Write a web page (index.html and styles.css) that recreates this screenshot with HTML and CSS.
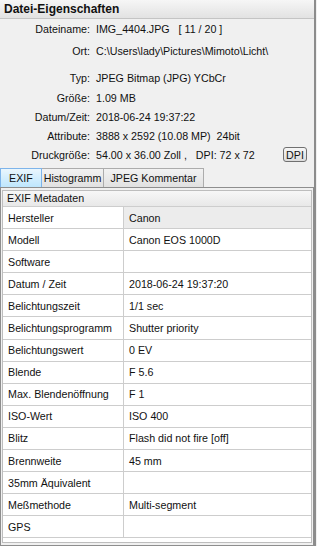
FILE: index.html
```html
<!DOCTYPE html>
<html lang="de">
<head>
  <meta charset="UTF-8">
  <meta name="viewport" content="width=device-width, initial-scale=1.0">
  <title>Datei-Eigenschaften</title>
  <link rel="stylesheet" href="styles.css">
</head>
<body>

<div class="window">
  <div class="title">Datei-Eigenschaften</div>

  <div class="props">
    <div class="row"><span class="label">Dateiname:</span><span class="value">IMG_4404.JPG &nbsp;&nbsp;[ 11 / 20 ]</span></div>
    <div class="row ort"><span class="label">Ort:</span><span class="value">C:\Users\lady\Pictures\Mimoto\Licht\</span></div>
    <div class="row typ"><span class="label">Typ:</span><span class="value">JPEG Bitmap (JPG) YCbCr</span></div>
    <div class="row size"><span class="label">Größe:</span><span class="value">1.09 MB</span></div>
    <div class="row"><span class="label">Datum/Zeit:</span><span class="value">2018-06-24 19:37:22</span></div>
    <div class="row"><span class="label">Attribute:</span><span class="value">3888 x 2592 (10.08 MP) &nbsp;24bit</span></div>
    <div class="row"><span class="label">Druckgröße:</span><span class="value">54.00 x 36.00 Zoll , &nbsp;&nbsp;DPI: 72 x 72</span><button class="dpi">DPI</button></div>
  </div>

  <div class="tabs">
    <div class="tab active">EXIF</div>
    <div class="tab histo">Histogramm</div>
    <div class="tab jpeg">JPEG Kommentar</div>
  </div>

  <div class="tabpanel">
    <div class="box">
      <div class="boxhead">EXIF Metadaten</div>
      <table class="exif">
        <tr class="sel"><td>Hersteller</td><td>Canon</td></tr>
        <tr><td>Modell</td><td>Canon EOS 1000D</td></tr>
        <tr><td>Software</td><td></td></tr>
        <tr><td>Datum / Zeit</td><td>2018-06-24 19:37:20</td></tr>
        <tr><td>Belichtungszeit</td><td>1/1 sec</td></tr>
        <tr><td>Belichtungsprogramm</td><td>Shutter priority</td></tr>
        <tr><td>Belichtungswert</td><td>0 EV</td></tr>
        <tr><td>Blende</td><td>F 5.6</td></tr>
        <tr><td>Max. Blendenöffnung</td><td>F 1</td></tr>
        <tr><td>ISO-Wert</td><td>ISO 400</td></tr>
        <tr><td>Blitz</td><td>Flash did not fire [off]</td></tr>
        <tr><td>Brennweite</td><td>45 mm</td></tr>
        <tr><td>35mm Äquivalent</td><td></td></tr>
        <tr><td>Meßmethode</td><td>Multi-segment</td></tr>
        <tr><td>GPS</td><td></td></tr>
      </table>
    </div>
  </div>
</div>

</body>
</html>
```

FILE: styles.css
```css
body {
  margin: 0;
  background-color: #f0f0f0;
  font-family: "Liberation Sans", Arial, sans-serif;
  font-size: 10.7px;
  color: #111;
  overflow: hidden;
}
.window {
  width: 314px;
  height: 546px;
  border-right: 2px solid #8c8c8c;
  background-color: #f0f0f0;
}
.title {
  height: 18px;
  line-height: 19px;
  padding-left: 4px;
  font-weight: bold;
  font-size: 12px;
  background: linear-gradient(#f6f6f6, #e2e2e2);
  border-bottom: 1px solid #c4c4c4;
}
.row {
  display: flex;
  align-items: center;
  height: 19px;
}
.row.ort {
  margin-top: 3px;
}
.row.typ {
  margin-top: 8px;
}
.row.size {
  margin-top: 1px;
}
.label {
  width: 90px;
  text-align: right;
  flex-shrink: 0;
}
.value {
  margin-left: 6px;
  white-space: nowrap;
}
.dpi {
  margin-left: auto;
  margin-right: 7px;
  height: 15px;
  width: 24px;
  padding: 0;
  font-family: inherit;
  font-size: 10.7px;
  color: #111;
  background: linear-gradient(#f6f6f6, #dcdcdc);
  border: 1px solid #707070;
  border-radius: 3px;
}
.tabs {
  display: flex;
  margin-top: 4px;
  height: 19px;
}
.tab {
  box-sizing: border-box;
  height: 19px;
  line-height: 18px;
  text-align: center;
  white-space: nowrap;
  border: 1px solid #acacac;
  border-bottom: none;
  margin-right: -1px;
  background: linear-gradient(#f2f2f2, #e1e1e1);
}
.tab.active {
  width: 42px;
  background: linear-gradient(#eaf6fd, #bee6fd);
  border-color: #7eb4ea;
  position: relative;
  z-index: 1;
}
.tab.histo {
  width: 63px;
}
.tab.jpeg {
  width: 101px;
}
.tabpanel {
  box-sizing: border-box;
  height: 359px;
  border: 1px solid #8e8e8e;
  padding: 2px 1px 2px 1px;
}
.box {
  box-sizing: border-box;
  height: 353px;
  border: 1px solid #bdbdbd;
  background-color: #fff;
}
.boxhead {
  height: 15px;
  line-height: 15px;
  padding-left: 4px;
  background: linear-gradient(#f7f7f7, #e8e8e8);
}
.exif {
  width: 100%;
  border-collapse: collapse;
}
.exif td {
  height: 21.1px;
  padding: 0 0 0 5px;
  border-top: 1px solid #cdcdcd;
  border-bottom: 1px solid #cdcdcd;
  white-space: nowrap;
}
.exif td:first-child {
  width: 115px;
  border-right: 1px solid #cdcdcd;
}
.exif tr.sel td:last-child {
  background-color: #ececec;
}
```
